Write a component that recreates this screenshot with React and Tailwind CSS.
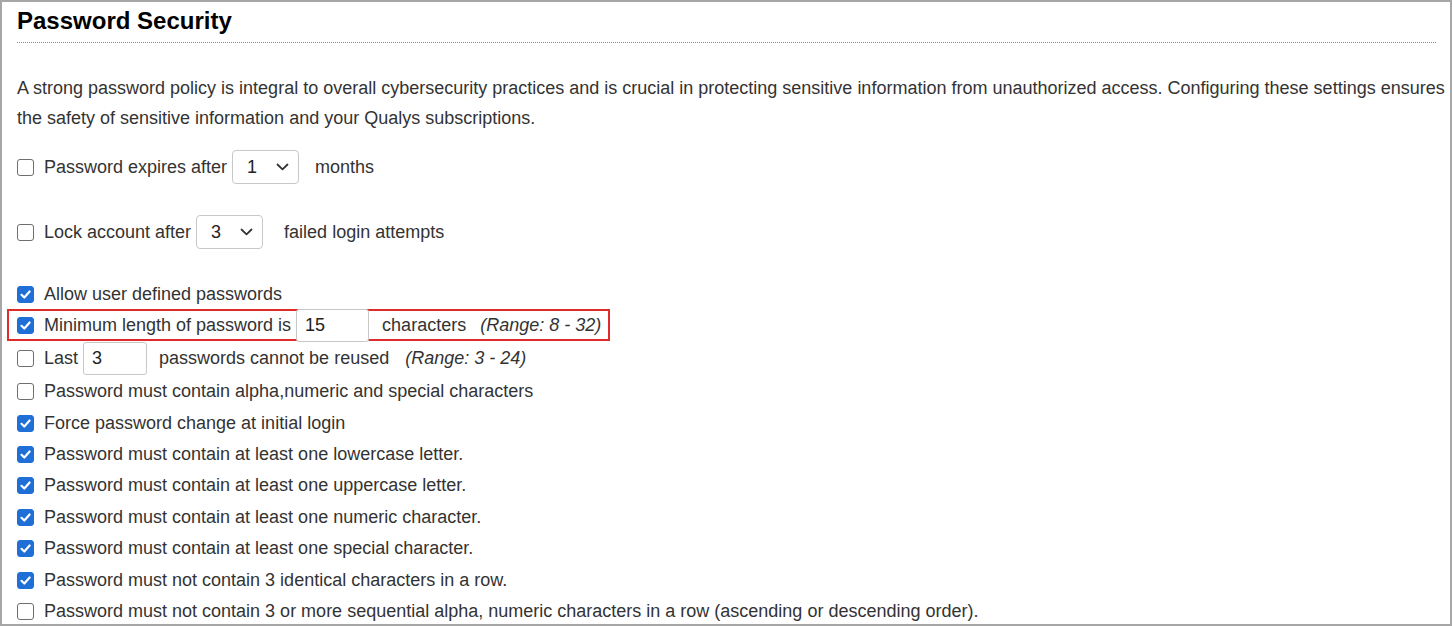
import React from 'react';

const Check = ({ on }) => (
    <span className={`w-[17px] h-[17px] shrink-0 rounded-[3px] flex items-center justify-center ${on ? 'bg-[#1f6fd6] border border-[#1f6fd6]' : 'bg-white border border-[#6e6e6e]'}`}>
        {on && (
            <svg width="13" height="13" viewBox="0 0 12 12" fill="none">
                <path d="M2.3 6.3 L4.9 8.8 L9.8 3.2" stroke="white" strokeWidth="2" strokeLinecap="round" strokeLinejoin="round" />
            </svg>
        )}
    </span>
);

const Select = ({ value, cls }) => (
    <span className={`h-[34px] w-[67px] border border-[#c8c8c8] rounded-[4px] flex items-center justify-between pl-[14px] pr-[9px] bg-white ${cls}`}>
        <span className="text-[#222]">{value}</span>
        <svg width="13" height="8" viewBox="0 0 13 8" fill="none">
            <path d="M1.5 1.5 L6.5 6.3 L11.5 1.5" stroke="#333" strokeWidth="1.8" strokeLinecap="round" strokeLinejoin="round" />
        </svg>
    </span>
);

const Input = ({ value, cls }) => (
    <span className={`h-[33px] border border-[#c8c8c8] rounded-[3px] flex items-center pl-[8px] bg-white text-[#222] ${cls}`}>{value}</span>
);

const Row = ({ on, children, h = 'h-[31.4px]' }) => (
    <div className={`flex items-center ${h}`}>
        <Check on={on} />
        <div className="flex items-center ml-[10px] whitespace-nowrap">{children}</div>
    </div>
);

const rules = [
    { on: false, label: 'Password must contain alpha,numeric and special characters' },
    { on: true, label: 'Force password change at initial login' },
    { on: true, label: 'Password must contain at least one lowercase letter.' },
    { on: true, label: 'Password must contain at least one uppercase letter.' },
    { on: true, label: 'Password must contain at least one numeric character.' },
    { on: true, label: 'Password must contain at least one special character.' },
    { on: true, label: 'Password must not contain 3 identical characters in a row.' },
    { on: false, label: 'Password must not contain 3 or more sequential alpha, numeric characters in a row (ascending or descending order).' },
];

export default function App() {
    return (
        <div className="w-[1452px] h-[626px] overflow-hidden bg-white border-2 border-[#a6a6a6] text-[18px] text-[#333] font-['Liberation_Sans',Arial,sans-serif]">
            <div className="pl-[15px] pr-[4px]">
                <h1 className="text-[24px] font-bold text-black leading-none pt-[7px] pb-[9px]">Password Security</h1>
                <div className="border-t border-dotted border-[#8a8a8a] mr-[10px]" />

                <p className="mt-[30px] leading-[30px]">
                    A strong password policy is integral to overall cybersecurity practices and is crucial in protecting sensitive information from unauthorized access. Configuring these settings ensures the safety of sensitive information and your Qualys subscriptions.
                </p>

                {/* EXPIRY / LOCKOUT */}
                <div className="mt-[17px]">
                    <Row on={false} h="h-[34px]">
                        <span>Password expires after</span>
                        <Select value="1" cls="ml-[5px]" />
                        <span className="ml-[16px]">months</span>
                    </Row>
                </div>
                <div className="mt-[31px]">
                    <Row on={false} h="h-[34px]">
                        <span>Lock account after</span>
                        <Select value="3" cls="ml-[5px]" />
                        <span className="ml-[21px]">failed login attempts</span>
                    </Row>
                </div>

                {/* PASSWORD RULES */}
                <div className="mt-[30px]">
                    <Row on={true} h="h-[30px]">
                        <span>Allow user defined passwords</span>
                    </Row>
                    <div className="-ml-[10px] w-[603px] h-[32px] border-2 border-[#e02b2b] pl-[8px] flex items-center">
                        <Check on={true} />
                        <div className="flex items-center ml-[10px] whitespace-nowrap">
                            <span>Minimum length of password is</span>
                            <Input value="15" cls="ml-[5px] w-[73px] h-[33px]" />
                            <span className="ml-[13px]">characters</span>
                            <span className="ml-[14px] italic">(Range: 8 - 32)</span>
                        </div>
                    </div>
                    <Row on={false} h="h-[35px]">
                        <span>Last</span>
                        <Input value="3" cls="ml-[5px] w-[64px]" />
                        <span className="ml-[12px]">passwords cannot be reused</span>
                        <span className="ml-[16px] italic">(Range: 3 - 24)</span>
                    </Row>
                    {rules.map((r, i) => (
                        <Row key={i} on={r.on}>
                            <span>{r.label}</span>
                        </Row>
                    ))}
                </div>
            </div>
        </div>
    );
}
